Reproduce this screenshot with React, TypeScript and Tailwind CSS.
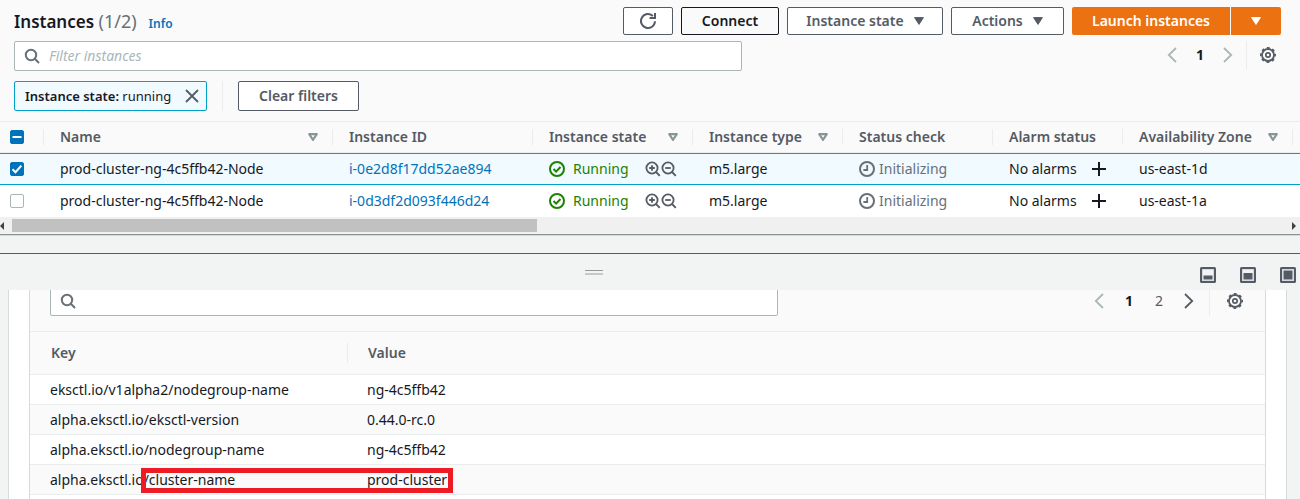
import type { ReactNode } from "react";

type IconProps = { className?: string };

function SearchIcon({ className = "" }: IconProps) {
  return (
    <svg viewBox="0 0 16 16" className={`size-4 shrink-0 ${className}`} fill="none" stroke="currentColor" strokeWidth="2" aria-hidden="true">
      <circle cx="7" cy="7" r="5.2" />
      <path d="M10.8 10.8 15 15" />
    </svg>
  );
}

function CaretIcon({ className = "" }: IconProps) {
  return (
    <svg viewBox="0 0 10 8" className={`h-2 w-[10px] shrink-0 ${className}`} fill="currentColor" stroke="currentColor" strokeLinejoin="round" aria-hidden="true">
      <path d="M.6.6h8.8L5 7.4z" />
    </svg>
  );
}

function SortIcon() {
  return (
    <svg viewBox="0 0 10 8" className="h-2 w-[10px] shrink-0 text-[#879596]" fill="none" stroke="currentColor" strokeWidth="2.1" strokeLinejoin="round" aria-hidden="true">
      <path d="M1.2 1.1h7.6L5 6.8z" />
    </svg>
  );
}

function RefreshIcon() {
  return (
    <svg viewBox="0 0 16 16" className="size-4" fill="none" stroke="currentColor" strokeWidth="2" aria-hidden="true">
      <path d="M15 8.3A7 7 0 1 1 12.9 3" />
      <path d="M15 0v5H9.6" />
    </svg>
  );
}

function ChevronIcon({ right = false, className = "" }: { right?: boolean; className?: string }) {
  return (
    <svg viewBox="0 0 10 16" className={`h-4 w-[10px] ${className}`} fill="none" stroke="currentColor" strokeWidth="1.8" aria-hidden="true">
      <path d={right ? "M1 1l7.2 7L1 15" : "M9 1L1.8 8 9 15"} />
    </svg>
  );
}

function GearIcon() {
  return (
    <svg viewBox="0 0 16 16" className="size-4" fill="none" stroke="currentColor" aria-hidden="true">
      <circle cx="8" cy="8" r="6" strokeWidth="1.8" />
      <circle cx="8" cy="8" r="7.2" strokeWidth="1.6" strokeDasharray="2.83 2.83" strokeDashoffset="1.4" />
      <circle cx="8" cy="8" r="2.2" strokeWidth="1.7" />
    </svg>
  );
}

function CheckCircleIcon() {
  return (
    <svg viewBox="0 0 16 16" className="size-4 shrink-0" fill="none" stroke="currentColor" strokeWidth="2" aria-hidden="true">
      <circle cx="8" cy="8" r="7" />
      <path d="M4.5 8l2.6 2.6 4.4-4.6" />
    </svg>
  );
}

function ClockIcon() {
  return (
    <svg viewBox="0 0 16 16" className="size-4 shrink-0" fill="none" stroke="currentColor" strokeWidth="2" aria-hidden="true">
      <circle cx="8" cy="8" r="7" />
      <path d="M8.2 4v5H4.4" strokeWidth="1.8" />
    </svg>
  );
}

function MagnifierIcon({ plus = false }: { plus?: boolean }) {
  return (
    <svg viewBox="0 0 16 16" className="size-4" fill="none" stroke="currentColor" strokeWidth="1.8" aria-hidden="true">
      <circle cx="7" cy="7" r="5.6" />
      <path d="M11 11l3.8 3.8" />
      <path d={plus ? "M4.2 7h5.6M7 4.2v5.6" : "M4.2 7h5.6"} />
    </svg>
  );
}

function PanelIcon({ top }: { top: number }) {
  return (
    <svg viewBox="0 0 16 16" className="size-4" aria-hidden="true">
      <rect x="1" y="1" width="14" height="14" rx=".6" fill="none" stroke="#545b64" strokeWidth="2" />
      <rect x="2.5" y="2.5" width="11" height="11" fill="none" stroke="#d5dbdb" />
      <rect x="3.5" y={top} width="9" height={12.5 - top} fill="#545b64" />
    </svg>
  );
}

function Checkbox({ label, state }: { label: string; state: "on" | "off" | "mixed" }) {
  return (
    <label className="grid size-[14px] place-items-center">
      <input
        type="checkbox"
        aria-label={label}
        defaultChecked={state !== "off"}
        className="col-start-1 row-start-1 size-[14px] appearance-none rounded-xs border border-[#aab7b8] bg-white checked:border-[#0073bb] checked:bg-[#0073bb]"
      />
      {state !== "off" && (
        <svg viewBox="0 0 14 14" className="pointer-events-none z-10 col-start-1 row-start-1 size-[14px]" fill="none" stroke="white" strokeWidth="2" aria-hidden="true">
          <path d={state === "mixed" ? "M2.5 7h9" : "M2.5 7.2l3 3 5.8-6.6"} />
        </svg>
      )}
    </label>
  );
}

function Button({ children, label, className = "" }: { children: ReactNode; label?: string; className?: string }) {
  return (
    <button
      type="button"
      aria-label={label}
      className={`flex items-center justify-center rounded-xs border font-semibold whitespace-nowrap ${className}`}
    >
      {children}
    </button>
  );
}

function IconButton({ label, children, className = "" }: { label: string; children: ReactNode; className?: string }) {
  return (
    <button type="button" aria-label={label} className={`flex items-center justify-center ${className}`}>
      {children}
    </button>
  );
}

const columns = [
  { name: "Name", width: "w-[289px]", sortable: true },
  { name: "Instance ID", width: "w-[200px]", sortable: false },
  { name: "Instance state", width: "w-[160px]", sortable: true },
  { name: "Instance type", width: "w-[150px]", sortable: true },
  { name: "Status check", width: "w-[150px]", sortable: false },
  { name: "Alarm status", width: "w-[130px]", sortable: false },
  { name: "Availability Zone", width: "w-[170px]", sortable: true },
];

const instances = [
  { name: "prod-cluster-ng-4c5ffb42-Node", id: "i-0e2d8f17dd52ae894", type: "m5.large", zone: "us-east-1d", selected: true },
  { name: "prod-cluster-ng-4c5ffb42-Node", id: "i-0d3df2d093f446d24", type: "m5.large", zone: "us-east-1a", selected: false },
];

const tags = [
  ["eksctl.io/v1alpha2/nodegroup-name", "ng-4c5ffb42"],
  ["alpha.eksctl.io/eksctl-version", "0.44.0-rc.0"],
  ["alpha.eksctl.io/nodegroup-name", "ng-4c5ffb42"],
  ["alpha.eksctl.io/cluster-name", "prod-cluster"],
];

function Toolbar() {
  return (
    <header className="border-b border-[#eaeded] bg-[#fafafa] pt-[7px] pb-[10px] pl-[14px]">
      <div className="flex h-7 items-center justify-between pr-[19px]">
        <div className="flex items-baseline">
          <h1 className="text-[17px] leading-6 font-semibold text-[#16191f]">
            Instances <span className="text-lg leading-6 font-normal text-[#687078]">(1/2)</span>
          </h1>
          <a href="#info" className="ml-3 text-xs font-semibold text-[#0073bb]">Info</a>
        </div>
        <div className="flex h-7 items-stretch gap-2">
          <Button label="Refresh" className="w-[50px] border-[#545b64] bg-white text-[#545b64]"><RefreshIcon /></Button>
          <Button className="w-[98px] border-[#16191f] text-[#16191f]">Connect</Button>
          <Button className="w-[156px] gap-[10px] border-[#545b64] bg-white text-[#545b64]">Instance state <CaretIcon /></Button>
          <Button className="w-[113px] gap-[10px] border-[#545b64] bg-white text-[#545b64]">Actions <CaretIcon /></Button>
          <div className="flex gap-px text-white">
            <button type="button" className="w-[158px] rounded-l-xs bg-[#ec7211] font-semibold whitespace-nowrap">Launch instances</button>
            <IconButton label="More launch options" className="w-[50px] rounded-r-xs bg-[#ec7211]"><CaretIcon /></IconButton>
          </div>
        </div>
      </div>
      <div className="mt-[6px] flex h-[30px] justify-between pr-6">
        <label className="flex w-[728px] items-center gap-[9px] rounded-xs border border-[#aab7b8] bg-white px-[9px] text-[#687078]">
          <SearchIcon />
          <input type="text" aria-label="Filter instances" placeholder="Filter instances" className="min-w-0 flex-1 bg-transparent outline-none placeholder:text-[#aab7b8] placeholder:italic" />
        </label>
        <nav aria-label="Instance pages" className="flex h-7 text-[#545b64]">
          <IconButton label="Previous page" className="w-7 text-[#aab7b8]"><ChevronIcon /></IconButton>
          <button type="button" className="w-7 font-bold text-[#16191f]">1</button>
          <IconButton label="Next page" className="w-7 text-[#aab7b8]"><ChevronIcon right /></IconButton>
          <IconButton label="Preferences" className="ml-1 border-l border-[#eaeded] pl-[13px]"><GearIcon /></IconButton>
        </nav>
      </div>
      <div className="mt-[10px] flex h-[30px]">
        <div className="flex w-[193px] items-center justify-between rounded-xs border border-[#00a1c9] bg-[#f1faff] pr-[7px] pl-[10px] text-[13px] whitespace-nowrap text-[#16191f]">
          <span><span className="font-semibold">Instance state:</span> running</span>
          <IconButton label="Remove filter" className="text-[#545b64]">
            <svg viewBox="0 0 14 14" className="size-[14px]" fill="none" stroke="currentColor" strokeWidth="1.8" aria-hidden="true">
              <path d="M1 1l12 12M13 1L1 13" />
            </svg>
          </IconButton>
        </div>
        <div className="ml-[15px] border-l border-[#eaeded] pl-[15px]">
          <Button className="h-full w-[121px] border-[#545b64] bg-white text-[#545b64]">Clear filters</Button>
        </div>
      </div>
    </header>
  );
}

function InstancesTable() {
  return (
    <div className="overflow-hidden">
      <table className="w-full min-w-[1300px] table-fixed border-separate border-spacing-0 text-left whitespace-nowrap">
        <thead className="bg-[#fafafa] text-[#545b64]">
          <tr>
            <th className="h-[31px] w-11 border-b border-[#eaeded] p-0">
              <div className="flex h-4 items-center border-r border-[#eaeded] pl-[10px]"><Checkbox label="Select all instances" state="mixed" /></div>
            </th>
            {columns.map((c) => (
              <th key={c.name} className={`border-b border-[#eaeded] p-0 font-semibold ${c.width}`}>
                <div className="flex h-4 items-center justify-between border-r border-[#eaeded] pr-[14px] pl-4">
                  {c.name}
                  {c.sortable && <SortIcon />}
                </div>
              </th>
            ))}
            <th className="border-b border-[#eaeded] p-0" />
          </tr>
        </thead>
        <tbody className="text-[#16191f]">
          {instances.map((row) => (
            <tr key={row.id} className={row.selected ? "bg-[#f1faff] *:border-y *:border-[#00a1c9]" : "bg-white"}>
              <td className="h-8 p-0 pl-[10px]"><Checkbox label={`Select ${row.id}`} state={row.selected ? "on" : "off"} /></td>
              <td className="p-0 pl-4">{row.name}</td>
              <td className="p-0 pl-4"><a href={`#${row.id}`} className="text-[#0073bb]">{row.id}</a></td>
              <td className="p-0 pl-4">
                <div className="flex items-center text-[#1d8102]">
                  <CheckCircleIcon />
                  <span className="w-20 pl-2">Running</span>
                  <IconButton label="Include state in filter" className="text-[#545b64]"><MagnifierIcon plus /></IconButton>
                  <IconButton label="Exclude state from filter" className="text-[#545b64]"><MagnifierIcon /></IconButton>
                </div>
              </td>
              <td className="p-0 pl-4">{row.type}</td>
              <td className="p-0 pl-4">
                <div className="flex items-center gap-1 text-[#687078]"><ClockIcon />Initializing</div>
              </td>
              <td className="p-0 pl-4">
                <div className="flex items-center">
                  <span className="w-[82px]">No alarms</span>
                  <IconButton label="Create alarm">
                    <svg viewBox="0 0 16 16" className="size-4" fill="none" stroke="currentColor" strokeWidth="2" aria-hidden="true"><path d="M8 1v14M1 8h14" /></svg>
                  </IconButton>
                </div>
              </td>
              <td className="p-0 pl-4">{row.zone}</td>
              <td className="p-0" />
            </tr>
          ))}
        </tbody>
      </table>
      <div className="flex h-[17px] items-center justify-between bg-[#f0f0f0] pr-1 text-[#404040]">
        <svg viewBox="0 0 4 8" className="h-2 w-1" fill="currentColor" aria-hidden="true"><path d="M4 0v8L0 4z" /></svg>
        <div className="ml-2 flex-1"><div className="h-[13px] w-[525px] bg-[#c1c1c1]" /></div>
        <svg viewBox="0 0 4 8" className="h-2 w-1" fill="currentColor" aria-hidden="true"><path d="M0 0v8l4-4z" /></svg>
      </div>
    </div>
  );
}

function TagsPanel() {
  return (
    <section aria-label="Tags" className="flex min-h-0 flex-1 overflow-hidden pr-[13px] pl-2">
      <div className="flex flex-1 border-x border-[#d5dbdb] bg-white px-5">
        <div className="flex-1 border-x border-[#d5dbdb]">
          <div className="flex h-[42px] items-start justify-between border-b border-[#eaeded] bg-[#fafafa] pr-[22px] pl-5">
            <label className="-mt-1 flex h-[30px] w-[728px] items-center gap-[9px] rounded-xs border border-[#aab7b8] bg-white px-[9px] text-[#687078]">
              <SearchIcon />
              <input type="text" aria-label="Search tags" className="min-w-0 flex-1 bg-transparent outline-none" />
            </label>
            <nav aria-label="Tag pages" className="-mt-1 flex h-[30px] text-[#545b64]">
              <IconButton label="Previous page" className="w-[30px] text-[#aab7b8]"><ChevronIcon /></IconButton>
              <button type="button" className="w-[30px] font-bold text-[#16191f]">1</button>
              <button type="button" className="w-[30px]">2</button>
              <IconButton label="Next page" className="w-[30px]"><ChevronIcon right /></IconButton>
              <IconButton label="Preferences" className="ml-[5px] border-l border-[#eaeded] pl-[17px]"><GearIcon /></IconButton>
            </nav>
          </div>
          <div className="relative">
            <table className="w-full table-fixed border-separate border-spacing-0 text-left whitespace-nowrap text-[#16191f]">
              <thead className="bg-[#fafafa] text-[#545b64]">
                <tr className="*:h-[43px] *:border-b *:border-[#eaeded] *:p-0">
                  <th className="w-[318px] font-semibold"><div className="border-r border-[#eaeded] pl-[21px]">Key</div></th>
                  <th className="font-semibold"><div className="pl-5">Value</div></th>
                </tr>
              </thead>
              <tbody>
                {tags.map(([key, value]) => (
                  <tr key={key} className="even:bg-[#fafafa] *:h-[30px] *:border-b *:border-[#eaeded] *:p-0">
                    <td><div className="pl-5">{key}</div></td>
                    <td><div className="pl-[19px]">{value}</div></td>
                  </tr>
                ))}
              </tbody>
            </table>
            <div className="pointer-events-none absolute bottom-[2px] left-[111px] h-[25px] w-[312px] border-5 border-[#ed1c24]" />
          </div>
        </div>
      </div>
    </section>
  );
}

export default function App() {
  return (
    <main className="flex h-screen flex-col overflow-hidden bg-[#f2f3f3] font-['Noto_Sans',sans-serif] text-sm leading-5">
      <Toolbar />
      <InstancesTable />
      <div className="h-[19px] shrink-0 border-t border-[#879596]"><div className="h-px bg-[#d5dbdb]" /></div>
      <div className="flex h-[37px] shrink-0 items-center border-t border-[#545b64] pt-[6px] pr-1">
        <div className="flex flex-1 justify-center pr-3">
          <div className="mb-[5px] flex w-[18px] flex-col gap-[2px]">
            <div className="h-px bg-[#999999]" />
            <div className="h-[2px] bg-[#c6c8c8]" />
          </div>
        </div>
        <div className="flex gap-6">
          <IconButton label="Small panel"><PanelIcon top={8.5} /></IconButton>
          <IconButton label="Half panel"><PanelIcon top={6} /></IconButton>
          <IconButton label="Full panel"><PanelIcon top={3.5} /></IconButton>
        </div>
      </div>
      <TagsPanel />
    </main>
  );
}
